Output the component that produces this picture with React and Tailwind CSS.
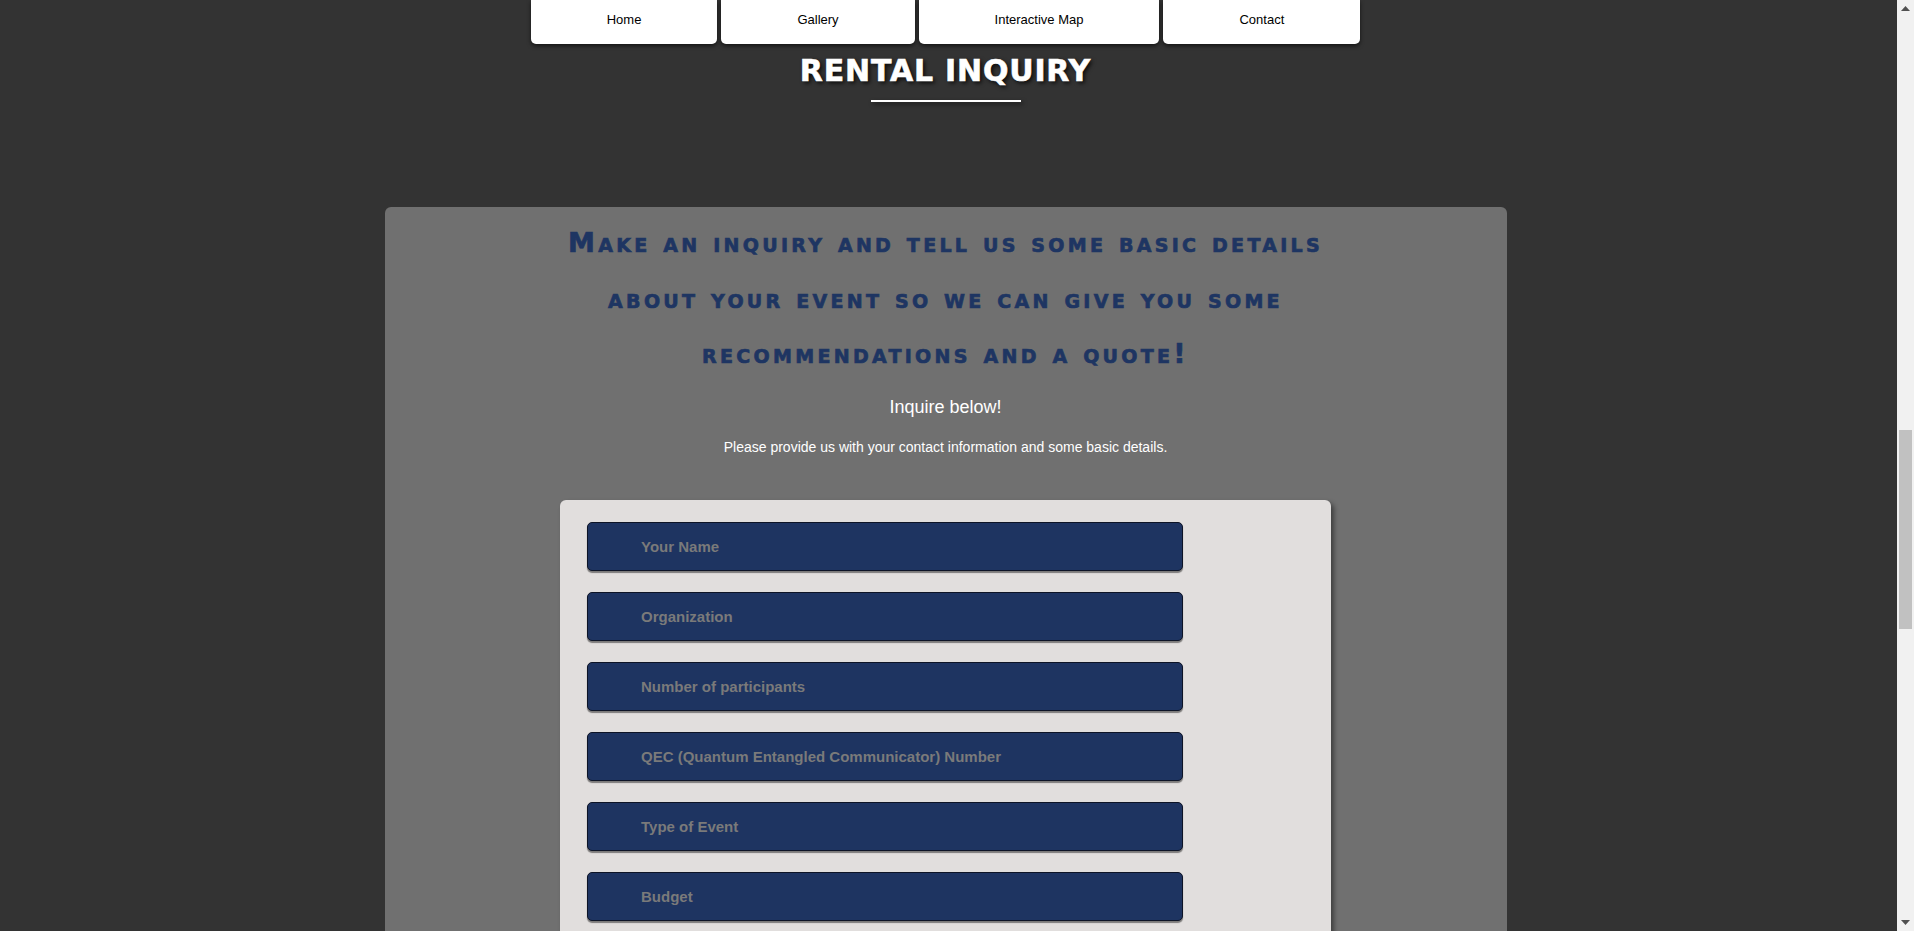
import React from "react";

const navItems = ["Home", "Gallery", "Interactive Map", "Contact"];
const fields = [
  "Your Name",
  "Organization",
  "Number of participants",
  "QEC (Quantum Entangled Communicator) Number",
  "Type of Event",
  "Budget",
  "Date",
];

export default function App() {
  return (
    <div className="flex h-[931px] w-full overflow-hidden bg-[#333333] font-['Liberation_Sans',Arial,sans-serif]">
      <main className="flex min-h-0 flex-1 flex-col items-center overflow-hidden pr-[6px]">
        <nav className="flex shrink-0 gap-1">
          {navItems.map((n) => (
            <div
              key={n}
              className="h-[44px] rounded-b-[5px] bg-white px-[76px] pt-[13px] text-[13px] leading-[14px] text-black shadow-[0_2px_4px_rgba(0,0,0,0.6)]"
            >
              {n}
            </div>
          ))}
        </nav>

        <h1 className="mt-[12px] shrink-0 font-['DejaVu_Sans',sans-serif] text-[30px] font-bold leading-[29px] tracking-[0.8px] text-white [-webkit-text-stroke:0.6px_white] [text-shadow:2px_2px_4px_rgba(0,0,0,0.85)]">
          RENTAL INQUIRY
        </h1>
        <div className="mt-[15px] h-[2px] w-[150px] shrink-0 bg-white shadow-[2px_2px_4px_rgba(0,0,0,0.6)]" />

        <section className="mt-[105px] flex w-[1122px] shrink-0 grow flex-col items-center rounded-t-[6px] bg-[#707070] pt-[8px]">
          <h2 className="w-[830px] shrink-0 text-center font-['DejaVu_Sans',sans-serif] text-[27px] font-bold leading-[55.5px] tracking-[3.3px] text-[#1e3562] [-webkit-text-stroke:0.7px_#1e3562] [font-variant:small-caps]">
            Make an inquiry and tell us some basic details about your event so we can give you some recommendations and a quote!
          </h2>
          <p className="mt-[15px] shrink-0 text-[18px] leading-[21px] text-white">Inquire below!</p>
          <p className="mt-[21px] shrink-0 text-[14px] leading-[16px] text-white">
            Please provide us with your contact information and some basic details.
          </p>

          <div className="mt-[45px] flex w-[771px] shrink-0 grow flex-col gap-[21px] rounded-t-[6px] bg-[#e1dedd] pl-[27px] pt-[22px] shadow-[3px_3px_5px_rgba(0,0,0,0.45)]">
            {fields.map((f) => (
              <input
                key={f}
                type="text"
                placeholder={f}
                className="h-[49px] w-[596px] shrink-0 rounded-[5px] border border-[#0d1426] bg-[#1e3461] pl-[53px] text-[15px] font-bold text-white shadow-[0_2px_1px_rgba(0,0,0,0.45)] outline-none placeholder:text-[#7a7a7a]"
              />
            ))}
          </div>
        </section>
      </main>

      <aside className="relative flex w-[17px] shrink-0 flex-col bg-[#f1f1f1]">
        <div className="flex h-[17px] shrink-0 items-center justify-center">
          <svg width="9" height="5" viewBox="0 0 9 5">
            <path d="M0 5 L4.5 0 L9 5 Z" fill="#505050" />
          </svg>
        </div>
        <div className="mt-[413px] ml-[2px] h-[199px] w-[13px] shrink-0 bg-[#c1c1c1]" />
        <div className="flex-1" />
        <div className="flex h-[17px] shrink-0 items-center justify-center">
          <svg width="9" height="5" viewBox="0 0 9 5">
            <path d="M0 0 L9 0 L4.5 5 Z" fill="#505050" />
          </svg>
        </div>
      </aside>
    </div>
  );
}
